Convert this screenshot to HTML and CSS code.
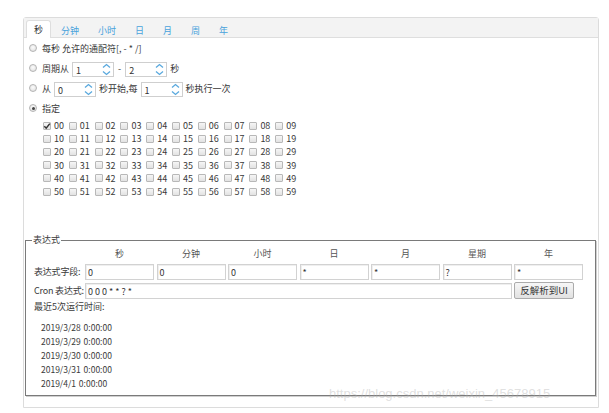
FILE: index.html
```html
<!DOCTYPE html>
<html lang="zh">
<head>
<meta charset="utf-8">
<title>Cron</title>
<link rel="stylesheet" href="styles.css">
</head>
<body>
<div class="panel">
  <div class="tabs">
    <span class="tab active">秒</span><span class="tab">分钟</span><span class="tab">小时</span><span class="tab">日</span><span class="tab">月</span><span class="tab">周</span><span class="tab">年</span>
  </div>
  <div class="pane">
    <div class="row"><span class="radio"></span>每秒 允许的通配符[, - * /]</div>
    <div class="row"><span class="radio"></span>周期从<span class="spin"><span class="val">1</span><svg class="arr" width="9" height="13" viewBox="0 0 9 13"><path d="M1 4.5 L4.5 1.5 L8 4.5 M1 8.5 L4.5 11.5 L8 8.5" fill="none" stroke="#5aa9de" stroke-width="1.3"/></svg></span><span class="sep">-</span><span class="spin"><span class="val">2</span><svg class="arr" width="9" height="13" viewBox="0 0 9 13"><path d="M1 4.5 L4.5 1.5 L8 4.5 M1 8.5 L4.5 11.5 L8 8.5" fill="none" stroke="#5aa9de" stroke-width="1.3"/></svg></span><span class="after">秒</span></div>
    <div class="row"><span class="radio"></span>从<span class="spin"><span class="val">0</span><svg class="arr" width="9" height="13" viewBox="0 0 9 13"><path d="M1 4.5 L4.5 1.5 L8 4.5 M1 8.5 L4.5 11.5 L8 8.5" fill="none" stroke="#5aa9de" stroke-width="1.3"/></svg></span><span class="after">秒开始,每</span><span class="spin"><span class="val">1</span><svg class="arr" width="9" height="13" viewBox="0 0 9 13"><path d="M1 4.5 L4.5 1.5 L8 4.5 M1 8.5 L4.5 11.5 L8 8.5" fill="none" stroke="#5aa9de" stroke-width="1.3"/></svg></span><span class="after">秒执行一次</span></div>
    <div class="row"><span class="radio checked"></span>指定</div>
    <div class="grid">
      <span class="cbi"><span class="cb on"><svg width="8" height="8" viewBox="0 0 8 8"><path d="M1.3 4.2 L3.2 6.2 L6.8 1.6" fill="none" stroke="#333" stroke-width="1.5"/></svg></span>00</span>
      <span class="cbi"><span class="cb"></span>01</span><span class="cbi"><span class="cb"></span>02</span><span class="cbi"><span class="cb"></span>03</span><span class="cbi"><span class="cb"></span>04</span><span class="cbi"><span class="cb"></span>05</span><span class="cbi"><span class="cb"></span>06</span><span class="cbi"><span class="cb"></span>07</span><span class="cbi"><span class="cb"></span>08</span><span class="cbi"><span class="cb"></span>09</span>
      <span class="cbi"><span class="cb"></span>10</span><span class="cbi"><span class="cb"></span>11</span><span class="cbi"><span class="cb"></span>12</span><span class="cbi"><span class="cb"></span>13</span><span class="cbi"><span class="cb"></span>14</span><span class="cbi"><span class="cb"></span>15</span><span class="cbi"><span class="cb"></span>16</span><span class="cbi"><span class="cb"></span>17</span><span class="cbi"><span class="cb"></span>18</span><span class="cbi"><span class="cb"></span>19</span>
      <span class="cbi"><span class="cb"></span>20</span><span class="cbi"><span class="cb"></span>21</span><span class="cbi"><span class="cb"></span>22</span><span class="cbi"><span class="cb"></span>23</span><span class="cbi"><span class="cb"></span>24</span><span class="cbi"><span class="cb"></span>25</span><span class="cbi"><span class="cb"></span>26</span><span class="cbi"><span class="cb"></span>27</span><span class="cbi"><span class="cb"></span>28</span><span class="cbi"><span class="cb"></span>29</span>
      <span class="cbi"><span class="cb"></span>30</span><span class="cbi"><span class="cb"></span>31</span><span class="cbi"><span class="cb"></span>32</span><span class="cbi"><span class="cb"></span>33</span><span class="cbi"><span class="cb"></span>34</span><span class="cbi"><span class="cb"></span>35</span><span class="cbi"><span class="cb"></span>36</span><span class="cbi"><span class="cb"></span>37</span><span class="cbi"><span class="cb"></span>38</span><span class="cbi"><span class="cb"></span>39</span>
      <span class="cbi"><span class="cb"></span>40</span><span class="cbi"><span class="cb"></span>41</span><span class="cbi"><span class="cb"></span>42</span><span class="cbi"><span class="cb"></span>43</span><span class="cbi"><span class="cb"></span>44</span><span class="cbi"><span class="cb"></span>45</span><span class="cbi"><span class="cb"></span>46</span><span class="cbi"><span class="cb"></span>47</span><span class="cbi"><span class="cb"></span>48</span><span class="cbi"><span class="cb"></span>49</span>
      <span class="cbi"><span class="cb"></span>50</span><span class="cbi"><span class="cb"></span>51</span><span class="cbi"><span class="cb"></span>52</span><span class="cbi"><span class="cb"></span>53</span><span class="cbi"><span class="cb"></span>54</span><span class="cbi"><span class="cb"></span>55</span><span class="cbi"><span class="cb"></span>56</span><span class="cbi"><span class="cb"></span>57</span><span class="cbi"><span class="cb"></span>58</span><span class="cbi"><span class="cb"></span>59</span>
    </div>
  </div>
  <fieldset class="expr">
    <legend>表达式</legend>
    <div class="fields">
      <span></span><span class="hd">秒</span><span class="hd">分钟</span><span class="hd">小时</span><span class="hd">日</span><span class="hd">月</span><span class="hd">星期</span><span class="hd">年</span>
      <span class="lbl">表达式字段:</span><span class="box">0</span><span class="box">0</span><span class="box">0</span><span class="box">*</span><span class="box">*</span><span class="box">?</span><span class="box">*</span>
      <span class="lbl">Cron 表达式:</span><span class="box cron">0 0 0 * * ? *</span><span class="btn">反解析到UI</span>
    </div>
    <div class="recent">最近5次运行时间:</div>
    <div class="dates">
      <div>2019/3/28 0:00:00</div>
      <div>2019/3/29 0:00:00</div>
      <div>2019/3/30 0:00:00</div>
      <div>2019/3/31 0:00:00</div>
      <div>2019/4/1 0:00:00</div>
    </div>
  </fieldset>
</div>
<div class="watermark">https://blog.csdn.net/weixin_45678915</div>
</body>
</html>
```

FILE: styles.css
```css
html, body {
  margin: 0;
  padding: 0;
  background: #fff;
}
body {
  font-family: "Noto Sans CJK SC", "Noto Sans", sans-serif;
  font-size: 9px;
  color: #3a3a3a;
  position: relative;
  width: 609px;
  height: 413px;
  overflow: hidden;
}
.panel {
  margin: 17px 0 0 23px;
  width: 576px;
  height: 391px;
  box-sizing: border-box;
  border: 1px solid #dcdcdc;
  border-radius: 3px 3px 0 0;
}
.tabs {
  height: 20px;
  box-sizing: border-box;
  background: #f3f3f3;
  border-bottom: 1px solid #dedede;
  padding: 3px 0 0 2px;
  display: flex;
  align-items: flex-end;
}
.tab {
  height: 17px;
  line-height: 17px;
  padding: 0 8px;
  margin-right: 1px;
  color: #48a2dc;
  box-sizing: border-box;
  border: 1px solid transparent;
  border-bottom: 0;
  margin-bottom: -1px;
}
.tab.active {
  background: #fff;
  color: #333;
  border-color: #dedede;
  border-radius: 3px 3px 0 0;
  height: 18px;
  padding: 0 7px;
}
.pane {
  padding: 0 0 0 5px;
}
.row {
  height: 20px;
  display: flex;
  align-items: center;
}
.radio {
  width: 8px;
  height: 8px;
  box-sizing: border-box;
  border-radius: 50%;
  border: 1px solid #b4b4b4;
  background: radial-gradient(circle at 50% 40%, #fbfbfb, #dcdcdc);
  margin-right: 5px;
  position: relative;
}
.radio.checked::after {
  content: "";
  position: absolute;
  left: 1.5px;
  top: 1.5px;
  width: 3px;
  height: 3px;
  border-radius: 50%;
  background: #444;
}
.spin {
  width: 42px;
  height: 15px;
  box-sizing: border-box;
  border: 1px solid #cfcfcf;
  margin: 2px 3px 0;
  display: flex;
  align-items: center;
  justify-content: space-between;
  padding: 0 2px 0 3px;
  background: #fff;
}
.spin .val {
  padding-top: 3px;
  color: #333;
}
.sep {
  margin: 0 1px;
}
.grid {
  margin: 1px 0 0 14px;
  display: grid;
  grid-template-columns: repeat(10, 25.8px);
  grid-auto-rows: 13.2px;
}
.cbi {
  display: flex;
  align-items: center;
  color: #3a3a3a;
}
.cb {
  width: 8px;
  height: 8px;
  box-sizing: border-box;
  border: 1px solid #b8b8b8;
  border-radius: 1px;
  background: linear-gradient(#f6f6f6, #e2e2e2);
  margin-right: 3px;
  display: flex;
  align-items: center;
  justify-content: center;
  overflow: visible;
}
.cb svg {
  flex: none;
}
.expr {
  margin: 36px 2px 0 1px;
  padding: 0 8px 5px 7px;
  border: 1px solid #7a7a7a;
  box-shadow: 1px 1px 0 #d0d0d0;
  min-width: 0;
}
.expr legend {
  padding: 0 1px;
  margin-left: -1px;
  line-height: 12px;
  color: #3a3a3a;
}
.fields {
  display: grid;
  grid-template-columns: 49.5px repeat(7, 69px);
  column-gap: 2.5px;
  grid-template-rows: 15px 16px 16px;
  row-gap: 3px;
}
.hd {
  text-align: center;
  line-height: 15px;
  color: #555;
}
.lbl {
  line-height: 16px;
  white-space: nowrap;
  padding-left: 1px;
  letter-spacing: -0.2px;
}
.box {
  height: 16px;
  box-sizing: border-box;
  border: 1px solid #d2d2d2;
  box-shadow: inset 1px 1px 0 #efefef;
  padding: 0 2px;
  line-height: 15px;
  color: #333;
  background: #fff;
}
.box.cron {
  grid-column: 2 / 8;
}
.btn {
  height: 17px;
  margin-top: -1px;
  width: 60px;
  box-sizing: border-box;
  border: 1px solid #ababab;
  border-radius: 2px;
  background: linear-gradient(#f7f7f7, #e1e1e1);
  text-align: center;
  line-height: 15px;
  font-size: 9.5px;
  color: #333;
}
.recent {
  line-height: 16px;
  padding-left: 1px;
}
.dates {
  margin-top: 5px;
  padding-left: 8px;
  font-size: 8.5px;
  word-spacing: 1px;
}
.dates div {
  line-height: 14px;
}
.watermark {
  position: absolute;
  left: 329px;
  top: 386px;
  font-family: "Liberation Sans", Arial, sans-serif;
  font-size: 13px;
  color: rgba(175, 175, 175, 0.4);
  white-space: nowrap;
}
```
